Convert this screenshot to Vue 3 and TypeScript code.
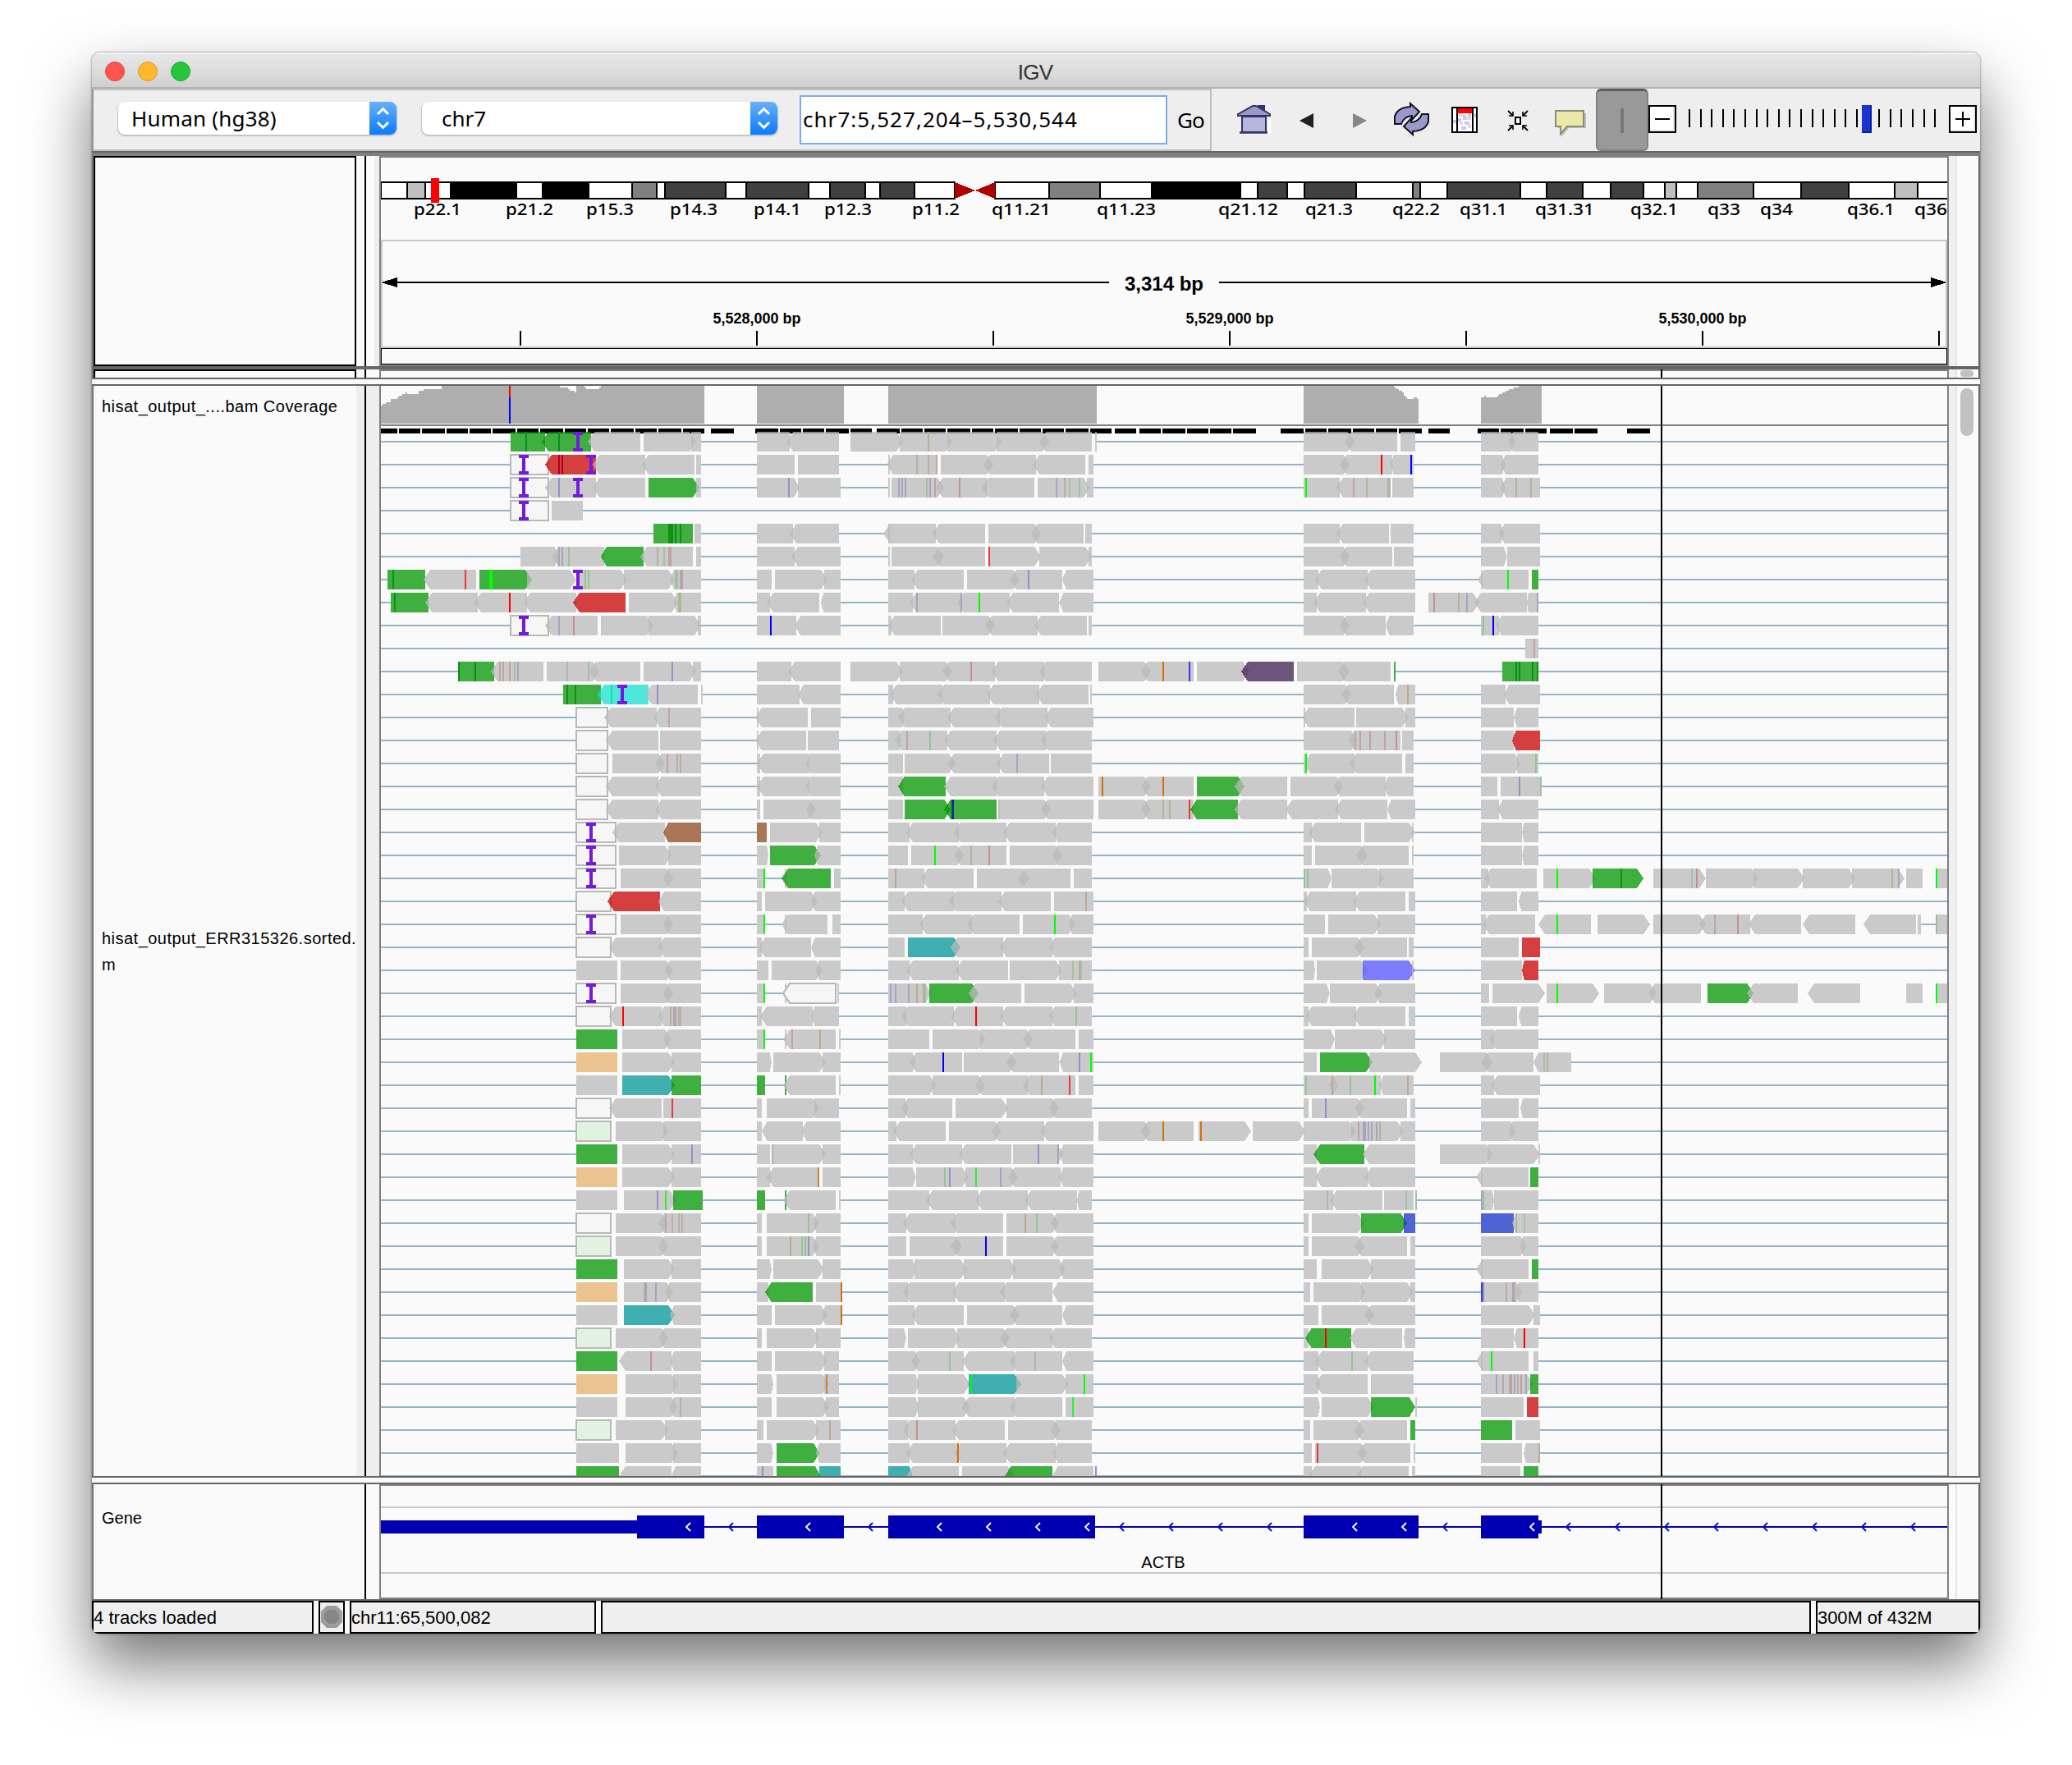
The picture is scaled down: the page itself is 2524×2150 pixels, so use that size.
<script setup lang="ts">
type Shape = { d: string; fill: string; stroke: string; alpha: number }
type Bar = { x: number; y: number; w: number; h: number; fill: string; alpha: number }

/* ---------- ideogram ---------- */
const W = '#ffffff', K = '#000000', D = '#404040', M = '#808080', L = '#bfbfbf'
const bandStops: [number, string][] = [
  [464, W], [496, L], [518, W], [549, K], [629, W], [661, K], [717, W], [770, M], [800, W], [810, D],
  [884, W], [909, D], [985, W], [1011, D], [1054, W], [1072, D], [1114, W], [1163, ''], [1212, W],
  [1278, M], [1340, W], [1403, K], [1511, W], [1532, D], [1568, W], [1589, D], [1652, W], [1721, M],
  [1730, W], [1763, D], [1852, W], [1884, D], [1928, W], [1962, D], [2002, W], [2028, L], [2042, W],
  [2068, M], [2136, W], [2194, D], [2252, W], [2308, L], [2336, W], [2374, '']
]
const bands = bandStops.slice(0, -1)
  .map(([x, fill], i) => ({ x, fill, w: bandStops[i + 1][0] - x }))
  .filter(b => b.fill)
const bandLabels: [number, string, number][] = [
  [504, 'p22.1', 58], [616, 'p21.2', 58], [714, 'p15.3', 58], [816, 'p14.3', 58], [918, 'p14.1', 58],
  [1004, 'p12.3', 58], [1111, 'p11.2', 58], [1208, 'q11.21', 72], [1336, 'q11.23', 72], [1484, 'q21.12', 73],
  [1590, 'q21.3', 58], [1696, 'q22.2', 58], [1778, 'q31.1', 58], [1870, 'q31.31', 72], [1986, 'q32.1', 58],
  [2080, 'q33', 40], [2144, 'q34', 40], [2250, 'q36.1', 58], [2332, 'q36', 40]
]
const rulerTicks = [633, 921, 1209, 1497, 1785, 2073, 2361]
const rulerLabels: [number, string][] = [[922, '5,528,000 bp'], [1498, '5,529,000 bp'], [2074, '5,530,000 bp']]

/* ---------- alignments ---------- */
// Panels of the viewport: [first pixel, units per pixel]
const panels: Record<string, [number, number]> = {
  A: [440, 2.45], B: [1060, 2.24], C: [1560, 1.7818], D: [640, 2.1778], E: [1320, 1.4519], G: [1320, 2.45]
}

// Reads: "=" block, "<" reverse, ">" forward, "_" unsequenced insert, I insertion; letter+level:pos is a mismatch.
const rows: string[] = [
  'A =g446-549 <g540-686 d4:492 d4:590 <677-833 I647 >843-999 =984-1014 =1181-1279 <1270-1426 >1460-1617 B >81-224 >211-358 >345-488 <462-605 =614-618 y1:159 >1183-1322 <1296-1438 =1447-1487 C >435-510 <495-559',
  'A =h446-559 I485 <r550-701 m4:590 m4:600 <692-848 I686 <840-995 =1000-1014 =1181-1294 =1303-1424 B =49-54 <43-184 y1:127 y1:159 y1:181 >193-336 <309-452 <445-587 =596-609 >1183-1307 <1282-1425 r4:1396 <1421-1483 b4:1476 C >435-488 <478-559',
  'A =h446-559 I485 <550-701 b2:590 I647 <692-848 >g857-1009 =1000-1014 >1181-1308 b2:1276 =1303-1431 B =49-54 >58-202 <177-319 b1:78 b1:87 b1:96 g1:154 b1:163 r1:177 r2:244 <306-448 >457-600 =591-609 b1:508 y1:531 g1:544 g1:571 =1183-1281 g4:1189 <1273-1420 r1:1319 y1:1355 y1:1413 g1:1418 =1425-1483 C >435-488 <478-563 y1:511 y1:543',
  'A =h446-559 I485 =568-661',
  'A =g872-990 e4:918 e4:923 e4:928 d4:938 e4:953 =995-1014 =1181-1289 <1280-1426 B =49-54 <37-179 <171-314 >323-466 <440-582 =587-605 =1183-1281 <1273-1416 =1420-1483 C >435-485 <475-563',
  'A >475-592 <569-725 b1:590 b1:600 g2:619 <g716-843 <834-990 y1:884 g1:904 r1:919 r1:924 =1000-1014 =1181-1294 <1285-1431 B =49-54 >58-202 <171-314 >323-466 r3:325 >461-604 =596-605 >1183-1307 <1282-1425 =1429-1483 C >435-492 =492-563',
  'A =g78-191 e4:96 <187-343 r3:311 >g353-509 g4:384 g4:388 >495-642 I647 >642-794 g2:668 g2:678 >784-934 <922-1014 g1:938 g1:943 r1:953 r1:958 =1181-1225 >1235-1391 =1381-1431 B =49-121 <112-255 >264-408 <381-524 b2:432 <525-609 =1183-1223 <1214-1357 <1349-1487 C <426-538 =435-438 g4:493 =g545-559',
  'A =g88-201 e4:100 <192-348 <339-495 r4:443 <486-642 <r633-789 >799-946 <932-1014 g2:948 y1:953 =1181-1220 <1211-1367 <1372-1431 B =49-116 <109-250 b1:127 b1:248 <238-381 g4:298 <373-515 <516-609 =1183-1219 <1211-1353 <1345-1487 C >321-431 r2:333 y1:386 b1:404 <421-536 <535-559 b1:557',
  'A =h446-559 I485 <550-706 b1:590 r2:634 >715-872 >857-1014 =1004-1014 =1181-1298 b4:1222 <1296-1431 B =49-58 <50-193 >197-340 <315-457 <448-591 =596-605 >1183-1307 <1282-1407 <1408-1483 C =435-474 g2:440 b4:461 <468-559',
  'C =531-559 r1:550',
  'A =g289-397 e4:291 d4:340 <387-544 r1:414 r1:423 r1:443 g1:458 b1:467 >554-710 g1:614 g1:678 <679-833 >843-999 =990-1014 b2:928 =1181-1284 <1275-1431 >1460-1617 B >81-224 <197-340 r2:275 <333-475 <462-605 >623-766 <740-883 o4:799 b3:871 >892-1036 <p1012-1156 >1165-1308 <1278-1420 =g1429-1434 C =g481-559 e4:511 d4:518 e4:547 e4:557',
  'A =g603-715 e4:614 e4:640 <c706-857 n4:747 I779 <848-1004 b2:884 =1014-1019 =1181-1308 <1304-1431 B =49-63 <54-197 <184-327 <319-461 <452-596 =600-605 >1183-1312 <1287-1429 <1433-1487 y2:1467 C =435-488 <486-563',
  'A =h642-734 <726-882 <873-1014 r1:919 =1181-1186 <1178-1333 =1343-1431 B >49-94 <77-220 <211-354 <342-484 <475-609 =1183-1187 <1179-1322 >1326-1469 =1460-1487 C =435-506 <507-559',
  'D =h136-218 <214-353 =357-466 =614-618 <608-745 =749-832 >963-997 <981-1119 r1:1012 g2:1074 <1112-1250 <1242-1381 <1368-1503 E >389-484 <468-560 y1:480 r1:490 r1:506 r1:533 r2:554 =563-584 =703-762 <r758-807',
  'D =h136-218 >231-370 <345-466 r1:377 y1:403 y1:411 =614-623 <614-754 <745-836 =963-1002 >1006-1141 <1119-1259 <1250-1389 b1:1304 =1394-1503 E =389-392 g4:394 <388-479 <471-563 =569-584 >703-772 =767-804 g2:801',
  'D =h136-218 <214-353 <345-466 =614-623 <614-754 <745-836 =963-1002 <g990-1115 <1111-1250 <1237-1376 <1368-1507 E >26-119 <102-195 o4:33 o4:140 >g200-285 <268-360 >366-459 <442-534 <532-584 =703-732 =738-810 b2:770 g1:808',
  'D =h136-218 <214-353 <345-466 =614-623 >632-771 <745-836 =963-1002 >g1006-1128 <g1112-1250 e4:1130 k4:1134 =1254-1256 >1254-1394 <1368-1507 E >26-119 <102-195 y1:140 y1:152 r3:187 <g189-273 <267-360 <358-450 <444-538 <537-587 =703-736 <732-804',
  'D =h136-240 I174 <232-370 <w367-466 =w614-640 >649-788 =779-836 =963-1019 <1010-1150 <1137-1276 <1268-1407 <1398-1503 E =389-404 <398-491 >497-586 =582-584 =703-775 <776-804',
  'D =h136-240 I174 >248-388 =379-466 >614-645 >g649-783 <768-836 =963-1015 >1024-1163 <1137-1276 g4:1087 y1:1182 r2:1230 >1285-1424 <1398-1503 E =389-404 >409-502 <482-575 =581-584 =703-775 <776-804',
  'D =h136-240 I174 >253-392 <366-466 =614-636 g4:634 =688-693 <g680-810 =819-836 =963-1058 y2:982 <1050-1189 >1198-1337 <1307-1446 =1455-1503 E >389-438 g2:391 g2:397 >438-531 =523-584 >703-717 <709-801 >813-906 g4:838 >g900-990 e4:951 >1008-1100 g1:1075 r2:1085 >1101-1193 >1185-1275 >1272-1364 >1359-1452 y1:1430 b1:1441 =1455-1484 =1508-1530 g4:1509',
  'D =h136-228 <r219-357 <353-466 =614-627 >636-774 <758-836 =963-1006 <998-1137 <1124-1263 <1254-1394 =1402-1507 y2:1487 E =389-395 <390-482 <477-569 =575-587 =703-767 <769-804',
  'D =h136-240 I174 >253-392 <366-466 =614-636 g4:634 =688-693 <681-801 =814-836 =963-1054 <1045-1185 <1172-1311 >1320-1459 g4:1404 <1442-1507 E =389-427 >433-525 =519-587 =703-711 <706-799 <805-897 g4:838 >909-1001 >1008-1101 <1089-1179 r1:1117 r2:1157 <1176-1269 <1272-1365 <1380-1472 =1475-1481 =1508-1530 g2:1509',
  'D =h136-228 <223-362 <354-466 =614-627 <618-758 <759-836 =963-1006 >t1015-1154 <1128-1267 <1259-1398 <1390-1503 E =389-398 >404-497 <479-572 =575-584 =703-769 =r775-807',
  'D =135-244 >253-392 <371-466 =614-645 >653-788 <771-836 =963-1019 <1011-1150 <1141-1281 >1285-1424 =1415-1503 g1:1453 y1:1469 g1:1474 E >389-410 >412-502 >v494-586 =582-584 =703-775 <r775-804',
  'D =h136-240 I174 >253-392 <366-466 =614-636 g4:634 =688-690 <h686-823 =828-832 >963-1074 b1:969 b1:982 b1:1017 r1:1039 y1:1056 g1:1061 >g1071-1202 <1176-1315 >1324-1463 =1455-1507 E >389-436 >436-528 <514-587 =703-717 >723-815 >819-912 g4:838 >920-1013 <1000-1092 >g1103-1184 <1173-1263 <1281-1373 _1373-1455 =1455-1484 =1508-1530 g4:1509',
  'D =h136-228 <223-362 r4:259 <354-466 y1:385 r1:395 b1:399 y1:407 y1:411 =614-627 <623-763 <759-832 =963-1010 <999-1137 <1128-1267 r4:1195 <1259-1398 <1390-1503 g2:1461 E =389-398 <392-482 <477-569 =575-587 =703-767 <769-804',
  'D =g135-244 >257-388 <366-466 =614-636 g4:634 =688-693 <686-823 r1:708 y2:782 =832-836 =963-1071 >1080-1220 >1207-1346 <1320-1459 =1468-1507 E >389-443 >444-537 =531-587 =703-726 <718-804',
  'D =o135-244 >257-396 =388-466 >614-653 >658-797 =788-836 >963-1037 <1020-1159 b4:1108 >1163-1302 <1276-1416 <1417-1507 b2:1470 g4:1500 E =389-412 >g418-511 >505-598 _598-630 >630-722 <703-796 <795-862 g1:814 y1:820',
  'D =135-244 >t257-396 =g388-466 =g614-636 =g688-693 <686-823 =832-836 >963-1088 >1080-1220 <1194-1333 <1320-1459 y2:1370 r3:1444 =1468-1507 E >389-449 <434-526 g2:393 y2:439 g2:471 g4:516 <524-584 y2:573 =703-726 <720-807',
  'D =h136-228 <223-362 =366-466 r3:390 =614-627 >640-779 =767-832 >963-1015 <998-1132 >1141-1280 >1276-1416 <1390-1503 G =657-671 >681-838 <809-965 b2:722 =975-990 =1186-1298 <1303-1357',
  'D =H136-228 >240-379 =366-466 =614-627 <628-736 <733-836 =963-984 <977-1115 >1124-1263 <1237-1376 <1368-1507 G >44-201 <172-328 o4:237 >343-500 o4:350 >505-661 >657-813 >799-955 r1:820 b1:835 b1:840 b1:850 b1:859 b1:874 y1:884 =946-990 >1186-1289 <1269-1357',
  'D =g135-244 >257-396 =388-466 b2:442 =614-651 >655-797 y1:655 =788-836 =963-1028 <1020-1159 <1150-1289 >1294-1429 b2:1361 b1:1414 <1416-1507 G =657-696 <g686-838 <833-990 _990-1063 >1063-1220 >1205-1361 =1357-1362',
  'D =o135-244 >257-396 =388-466 >614-653 <640-780 o3:777 =788-836 >963-1036 >1037-1176 g2:1113 b2:1126 >1167-1307 g3:1195 b1:1261 <1281-1420 <1417-1507 G =657-696 <691-848 <838-990 <1173-1328 =1186-1190 =g1333-1357',
  'D =135-244 >261-400 b2:350 g3:372 =g392-470 =g614-636 =g688-693 <686-823 =832-836 =963-1071 <1064-1202 <1194-1333 <1325-1463 <1464-1503 G =657-745 g1:727 <736-892 =897-985 g1:962 =990-995 g1:992 >1186-1224 b1:1188 g1:1193 =1225-1357',
  'D =h136-228 >240-379 <354-466 r1:372 y1:390 y1:407 y1:416 =614-627 >640-779 g2:751 <763-836 =963-1010 <1003-1141 <1128-1267 >1276-1415 y2:1326 g2:1357 <1394-1507 G =657-671 >681-838 >g828-965 =u955-990 =u1186-1284 <1280-1357 y1:1291 g1:1315',
  'D =H136-228 >240-379 <353-466 =614-627 >640-779 y2:703 g2:734 g2:742 b2:751 <763-836 =963-1010 >1019-1159 <1128-1267 b4:1222 >1276-1415 <1394-1507 G =657-671 >681-838 <809-965 =975-990 >1186-1323 <1304-1357',
  'D =g135-244 >261-396 =388-466 >614-653 >658-792 =788-836 >963-1037 >1032-1171 >1163-1302 >1294-1433 <1416-1507 G =657-696 >710-867 =857-990 <1173-1328 =1186-1190 =g1338-1357',
  'D =o135-244 >261-392 y1:316 b1:320 b1:346 <371-466 =614-645 <g636-762 =771-836 o4:838 =963-1015 <1003-1141 <1133-1272 <1259-1398 <1396-1507 G =657-676 >686-843 >828-985 =975-990 >1186-1308 b3:1188 b2:1193 y1:1261 b1:1281 y1:1286 <1290-1357',
  'D =135-244 >t261-396 <384-466 =614-653 >662-801 <789-836 o4:838 =963-1032 <1024-1163 >1172-1311 <1285-1424 <1425-1507 G =657-701 >710-867 <838-990 >1186-1347 =1343-1362',
  'D =H136-228 >240-379 <353-466 =614-627 >640-779 =771-836 >963-1011 >1015-1154 >1146-1285 <1259-1398 <1390-1503 G =657-671 <g661-799 r4:722 <794-951 <955-990 =1186-1284 <1285-1357 r4:1315',
  'D =g135-244 <248-388 r2:333 <384-466 =614-653 >662-801 =793-832 >963-1045 <1024-1163 g2:1126 <1160-1298 <1285-1424 y1:1352 <1425-1507 G =657-701 <691-848 g2:801 <838-985 <1173-1328 =1186-1190 g4:1217 =1343-1357',
  'D =o135-244 >266-405 =392-466 >614-658 >666-805 =793-832 o3:799 >963-1044 >1041-1180 >t1176-1315 g4:1182 >1302-1442 =1433-1507 g4:1483 G >657-706 <691-848 =857-985 >1186-1345 b1:1232 r1:1251 r1:1272 r1:1276 b1:1286 y1:1296 r1:1305 b1:1320 =g1333-1357',
  'D =135-244 >266-405 <384-466 y1:411 =614-653 >666-805 <793-832 >963-1044 >1041-1180 <1159-1298 <1285-1424 =1433-1507 g3:1453 G >657-706 >710-867 >g857-992 =990-995 =1186-1313 =r1323-1357',
  'D =H136-228 >240-379 =370-466 =614-632 >640-779 =771-836 y2:808 =963-1015 <1003-1141 r2:1039 <1133-1272 >1281-1420 <1394-1503 G =657-676 >686-838 <809-965 =g975-990 =g1186-1279 =1289-1362',
  'D =135-248 >266-405 =392-466 >614-658 >g666-779 <771-836 =963-1019 <1010-1150 o4:1148 <1138-1276 <1268-1407 <1398-1503 G =657-681 >691-848 r3:698 <819-975 =985-990 =1186-1308 <1313-1362 y1:1359',
  'D =g135-248 <248-388 <388-466 =614-658 b2:629 >g666-784 =t780-836 >t963-1028 <1011-1150 >1159-1298 <g1270-1398 <1398-1507 b2:1513 G =657-681 <671-828 <814-970 =980-990 =1186-1303 =g1313-1357'
]

const readFill: Record<string, string> = {
  '': 'rgb(185,185,185)', g: 'rgb(0,150,0)', r: 'rgb(200,0,0)', t: 'rgb(0,150,150)', c: 'rgb(22,223,210)',
  w: 'rgb(143,73,34)', p: 'rgb(60,30,83)', v: 'rgb(83,83,255)', u: 'rgb(20,50,200)', o: 'rgb(228,176,107)',
  h: '#f6f6f6', H: '#e1f2e1'
}
const baseFill: Record<string, string> = {
  r: '#ff0000', g: '#00ff00', b: '#0000ff', o: '#d17105', d: '#078c28', e: '#109010', m: '#b00018',
  n: '#10e0a0', k: '#0818c8'
}
// Low-quality mismatches fade toward the read colour.
const fadedFill: Record<string, string> = {
  r1: '#c1a2a2', g1: '#a4c0a4', b1: '#a5a4c2', y1: '#baae9f',
  r2: '#c79090', g2: '#92c692', b2: '#9290c8', y2: '#bfa78c',
  r3: '#ee3636', g3: '#30f030', b3: '#3636ee', o3: '#cd8434'
}

const reads: Shape[] = []
const marks: Bar[] = []
const links: Bar[] = []
const snap = (n: number) => Math.round(n / 2) * 2
const LEFT = 464, RIGHT = 2372

rows.forEach((row, i) => {
  const top = 526 + i * 28
  const mid = top + 12
  const bottom = top + 24
  const spans: [number, number][] = []
  let panel = panels.A
  for (const token of row.split(' ')) {
    if (panels[token]) { panel = panels[token]; continue }
    const [origin, scale] = panel
    const px = (n: string) => snap(origin + Number(n) / scale)
    const read = /^([=<>_])([a-zH]?)(\d+)-(\d+)$/.exec(token)
    if (read) {
      const [, kind, tint, from, to] = read
      const a = px(from)
      const b = Math.max(px(to), a + 2)
      spans.push([kind === '<' ? a + 2 : a, b])
      if (kind === '_') continue
      const tip = Math.min(8, (b - a) / 7.5)
      const hollow = tint === 'h' || tint === 'H'
      const d = kind === '<'
        ? `M${a} ${mid}L${a + tip} ${top}H${b}V${bottom}H${a + tip}Z`
        : kind === '>'
          ? `M${a} ${top}H${b - tip}L${b} ${mid}L${b - tip} ${bottom}H${a}Z`
          : `M${a} ${top}H${b}V${bottom}H${a}Z`
      reads.push({ d, fill: readFill[tint], stroke: hollow ? '#b8b8b8' : 'none', alpha: hollow ? 1 : 0.75 })
      continue
    }
    if (token[0] === 'I') {
      const c = px(token.slice(1))
      const fill = '#7519dd'
      marks.push({ x: c - 2, y: top, w: 4, h: 24, fill, alpha: 1 })
      marks.push({ x: c - 6, y: top, w: 12, h: 4, fill, alpha: 1 })
      marks.push({ x: c - 6, y: bottom - 4, w: 12, h: 4, fill, alpha: 1 })
      continue
    }
    const x = snap(origin + Number(token.slice(3)) / scale - 1)
    marks.push({ x, y: top, w: 2, h: 24, fill: fadedFill[token.slice(0, 2)] ?? baseFill[token[0]], alpha: 1 })
  }
  spans.sort((p, q) => p[0] - q[0])
  let at = LEFT
  for (const [a, b] of spans) {
    if (a - at > 17 || (at === LEFT && a > LEFT)) links.push({ x: at, y: mid - 1, w: a - at, h: 2, fill: '#93b5c9', alpha: 1 })
    at = Math.max(at, b)
  }
  if (at < RIGHT) links.push({ x: at, y: mid - 1, w: RIGHT - at, h: 2, fill: '#93b5c9', alpha: 1 })
})

/* ---------- junction dashes ---------- */
const dashSource: Record<string, string> = {
  A: '59-108 113-176 181-250 255-318 323-387 392-461 465-529 534-603 608-671 676-740 745-813 818-882 887-955 960-1024 1044-1112 1176-1245 1249-1313 1318-1382 1387-1455 1460-1524',
  B: '-42-4 18-81 85-143 148-206 211-273 278-336 341-403 408-466 471-529 533-596 600-659 668-726 735-793 797-860 865-923 927-985 990-1053 1120-1183 1187-1245 1250-1313 1317-1375 1380-1438 1443-1505',
  C: '321-367 428-474 478-527 531-577 584-634 638-688 752-802'
}
const dashes = Object.entries(dashSource).flatMap(([key, list]) => {
  const [origin, scale] = panels[key]
  return list.split(' ').map(item => {
    const m = /^(-?\d+)-(\d+)$/.exec(item)!
    const x = Math.round(origin + Number(m[1]) / scale)
    return { x, w: Math.max(0, Math.round(origin + Number(m[2]) / scale) - x) }
  })
})

/* ---------- coverage ---------- */
const coverage = [
  'M464 516V494H466V492H470V490H476V486H484V484H486V482H490V480H494V478H496V480H510V476H516V474H538V470H682V472H688V472H692V474H694V476H700V478H702V470H712V472H714V474H730V472H732V470H858V516Z',
  'M922 470H1028V516H922Z',
  'M1082 470H1336V516H1082Z',
  'M1588 470H1698V472H1701V474H1704V476H1708V478H1710V482H1712V484H1714V486H1722V484H1726V486H1728V516H1588Z',
  'M1804 516V484H1808V482H1810V484H1824V482H1826V480H1830V478H1834V476H1838V474H1844V472H1850V470H1878V516Z'
]

/* ---------- gene model ---------- */
const exons: [number, number][] = [[776, 858], [922, 1028], [1082, 1334], [1588, 1728], [1804, 1874]]
const chevrons = [836, 888, 982, 1058, 1142, 1202, 1262, 1322, 1364, 1424, 1484, 1544, 1648, 1708, 1758, 1864, 1908, 1968, 2028, 2088, 2148, 2208, 2268, 2328]
const inExon = (x: number) => exons.some(([a, b]) => x >= a && x <= b)

const zoomTicks = Array.from({ length: 23 }, (_, i) => Math.round(2057 + i * 13.6)).filter((_, i) => i !== 16)
</script>

<template>
  <div class="desktop">
    <div class="window">
      <header class="titlebar">
        <div class="lights"><i class="red" /><i class="yellow" /><i class="green" /></div>
        <div class="title">IGV</div>
      </header>

      <div class="toolbar">
        <div class="command">
          <div class="combo genome"><span>Human (hg38)</span>
            <svg class="stepper" width="33" height="40" viewBox="0 0 33 40"><path d="M10 15L16.5 8.500L23 15M10 25L16.500 31.500L23 25" /></svg>
          </div>
          <div class="combo chrom"><span>chr7</span>
            <svg class="stepper" width="33" height="40" viewBox="0 0 33 40"><path d="M10 15L16.500 8.500L23 15M10 25L16.500 31.500L23 25" /></svg>
          </div>
          <div class="locus">chr7:5,527,204–5,530,544</div>
          <div class="go">Go</div>
        </div>
        <div class="icons">
          <svg width="64" height="76" viewBox="1496 108 64 76">
            <path d="M1514 163H1548V146H1545V161" fill="#fff" />
            <rect x="1513" y="142" width="29" height="19" fill="#b5b5dd" stroke="#333366" stroke-width="2" />
            <path d="M1533 136V129H1540V142" fill="#333366" stroke="#333366" stroke-width="2" />
            <path d="M1508 139L1526 129H1530L1547 139V141H1508Z" fill="#9999c6" stroke="#333366" stroke-width="2" />
            <path d="M1510 161.500H1544" stroke="#333366" stroke-width="2.500" />
          </svg>
          <svg width="64" height="76" viewBox="1560 108 64 76"><path d="M1583 147L1600 138V156Z" fill="#222" /></svg>
          <svg width="64" height="76" viewBox="1624 108 64 76"><path d="M1665 147L1648 138V156Z" fill="#878787" /></svg>
          <svg width="64" height="76" viewBox="1688 108 64 76">
            <g fill="#9999cc" stroke="#111122" stroke-width="2" stroke-linejoin="miter">
              <path d="M1699 151V142Q1702 131 1718 130V126L1729 136L1720 146V141Q1710 142 1707 151Z" />
              <path d="M1699 151V142Q1702 131 1718 130V126L1729 136L1720 146V141Q1710 142 1707 151Z" transform="rotate(180 1719.500 145)" />
            </g>
          </svg>
          <svg width="64" height="76" viewBox="1752 108 64 76" shape-rendering="crispEdges">
            <rect x="1769" y="131" width="30" height="30" fill="#fff" stroke="#000" stroke-width="2" />
            <path d="M1776 138h6v4h-6zM1786 142h6v4h-6zM1778 148h4v4h-4zM1788 152h4v4h-4z" fill="#ffd0d0" />
            <path d="M1782 140h4v6h-4zM1776 144h4v4h-4zM1784 148h6v4h-6zM1780 154h6v4h-6zM1788 138h4v4h-4zM1770 146h4v4h-4zM1796 138h2v5h-2z" fill="#c4c8ff" />
            <rect x="1776" y="132" width="17" height="6" fill="#f00" />
            <path d="M1775 131V161M1794 131V161" stroke="#000" stroke-width="2" />
          </svg>
          <svg width="64" height="76" viewBox="1816 108 64 76">
            <rect x="1846" y="143" width="6" height="8" fill="#fff" stroke="#000" stroke-width="2" />
            <path d="M1837 135L1843 141M1861 135L1855 141M1837 159L1843 153M1861 159L1855 153" stroke="#000" stroke-width="1.800" />
            <path d="M1843 136V141H1838M1855 136V141H1860M1843 158V153H1838M1855 158V153H1860" fill="none" stroke="#000" stroke-width="1.600" />
          </svg>
          <svg width="64" height="76" viewBox="1880 108 64 76">
            <path d="M1898 138H1932V156H1911L1902 167V156H1898Z" fill="#bdbdbd" />
            <path d="M1895 135H1929V154H1909L1901 163V154H1895Z" fill="#ece8a8" stroke="#8c8c7c" stroke-width="2" />
          </svg>
          <div class="pressed"><i /></div>
          <div class="zoombox"><svg width="30" height="30"><path d="M6 15H24" stroke="#000" stroke-width="2" /></svg></div>
          <svg width="332" height="76" viewBox="2042 108 332 76" shape-rendering="crispEdges">
            <rect v-for="x in zoomTicks" :key="x" :x="x" y="133" width="2" height="22" />
            <rect x="2268" y="128" width="12" height="34" fill="#0c1f9c" />
            <rect x="2268" y="128" width="10" height="32" fill="#1a35d4" />
          </svg>
          <div class="zoombox"><svg width="30" height="30"><path d="M6 15H24M15 6V24" stroke="#000" stroke-width="2" /></svg></div>
        </div>
      </div>

      <section class="row head">
        <div class="names boxed" />
        <div class="gap" /><div class="rule" /><div class="gutter" />
        <svg class="data" width="1908" height="256" viewBox="464 190 1908 256">
          <g shape-rendering="crispEdges">
            <rect x="464" y="190" width="1908" height="2" fill="#808080" />
            <rect v-for="b in bands" :key="b.x" :x="b.x" y="222" :width="b.w" height="20" :fill="b.fill" :stroke="b.fill === K ? 'none' : '#000'" stroke-width="1.500" />
            <path d="M464 221H1164V223H464ZM464 241H1164V243H464ZM1211 221H2372V223H1211ZM1211 241H2372V243H1211Z" />
            <path d="M1163 222L1188 232L1163 242ZM1212 222L1188 232L1212 242Z" fill="#b00000" />
            <rect x="525" y="217" width="10" height="30" fill="#f00" />
            <path d="M465 423V293H2371V423Z" fill="none" stroke="#c9c7d1" stroke-width="2" />
            <rect x="464.500" y="424.500" width="1907" height="19" fill="#fafafa" stroke="#000" stroke-width="1" />
            <path d="M484 343H1351V345H484ZM1485 343H2352V345H1485ZM464 344L484 338V350ZM2372 344L2352 338V350Z" />
            <rect v-for="x in rulerTicks" :key="x" :x="x" y="403" width="2" height="18" />
            <rect x="464" y="444" width="1908" height="2" fill="#808080" />
          </g>
          <text v-for="l in bandLabels" :key="l[0]" class="band" :x="l[0]" y="262" :textLength="l[2]" lengthAdjust="spacingAndGlyphs">{{ l[1] }}</text>
          <text class="span" x="1418" y="354">3,314 bp</text>
          <text v-for="l in rulerLabels" :key="l[0]" class="pos" :x="l[0]" y="394">{{ l[1] }}</text>
        </svg>
        <div class="pad" /><div class="scroll" />
      </section>
      <div class="split thick" />

      <section class="row strip">
        <div class="names boxed open" />
        <div class="gap" /><div class="rule" /><div class="gutter" />
        <svg class="data" width="1908" height="10" viewBox="464 450 1908 10">
          <rect x="464" y="450" width="1908" height="2" fill="#808080" />
          <rect x="2023" y="450" width="2" height="10" />
        </svg>
        <div class="pad" /><div class="scroll"><i class="thumb small" /></div>
      </section>
      <div class="split bar" />

      <section class="row tracks">
        <div class="names">
          <div class="label coverage">hisat_output_....bam Coverage</div>
          <div class="label reads">hisat_output_ERR315326.sorted.<br>m</div>
        </div>
        <div class="gap grey" /><div class="rule" /><div class="gutter grey" />
        <svg class="data" width="1908" height="1328" viewBox="464 470 1908 1328" shape-rendering="crispEdges">
          <path v-for="d in coverage" :key="d" :d="d" fill="#aeaeae" />
          <rect x="620" y="470" width="2" height="14" fill="#f00" />
          <rect x="620" y="484" width="2" height="32" fill="#00f" />
          <rect x="464" y="517" width="1908" height="2" fill="#808080" />
          <rect v-for="(s, i) in dashes" :key="'d' + i" :x="s.x" y="522" :width="s.w" height="6" />
          <rect v-for="(l, i) in links" :key="'l' + i" :x="l.x" :y="l.y" :width="l.w" :height="l.h" :fill="l.fill" />
          <path v-for="(r, i) in reads" :key="'r' + i" :d="r.d" :fill="r.fill" :stroke="r.stroke" stroke-width="2" :opacity="r.alpha" />
          <rect v-for="(m, i) in marks" :key="'m' + i" :x="m.x" :y="m.y" :width="m.w" :height="m.h" :fill="m.fill" :opacity="m.alpha" />
          <rect x="2023" y="470" width="2" height="1328" />
        </svg>
        <div class="pad" /><div class="scroll"><i class="thumb" /></div>
      </section>
      <div class="split bar" />

      <section class="row gene">
        <div class="names"><div class="label">Gene</div></div>
        <div class="gap" /><div class="rule" /><div class="gutter" />
        <svg class="data" width="1908" height="140" viewBox="464 1808 1908 140">
          <g shape-rendering="crispEdges">
            <path d="M464 1808H2372V1810H464ZM464 1946H2372V1948H464Z" fill="#808080" />
            <path d="M464 1835H2372V1837H464ZM464 1915H2372V1917H464Z" fill="#c9c7d1" />
            <g fill="#0000b2">
              <rect x="464" y="1852" width="312" height="16" />
              <rect x="776" y="1859" width="1596" height="2" />
              <rect x="1874" y="1852" width="4" height="16" />
              <rect v-for="e in exons" :key="e[0]" :x="e[0]" y="1846" :width="e[1] - e[0]" height="28" />
            </g>
          </g>
          <path v-for="x in chevrons" :key="x" :d="`M${x + 5} 1855L${x} 1860L${x + 5} 1865`" fill="none" :stroke="inExon(x) ? '#fff' : '#0000e0'" stroke-width="1.800" />
          <text class="name" x="1417" y="1910">ACTB</text>
          <rect x="2023" y="1808" width="2" height="140" />
        </svg>
        <div class="pad" /><div class="scroll" />
      </section>
      <div class="split thin" />

      <footer class="status">
        <div class="cell c1">4 tracks loaded</div>
        <div class="cell c2">
          <svg width="28" height="30" viewBox="0 0 28 30"><path d="M8 1H20L27 8V21L20 28H8L1 21V8Z" fill="#9c9c9c" /><path d="M10 6H18L23 11V18L18 23H10L5 18V11Z" fill="#868686" /></svg>
        </div>
        <div class="cell c3">chr11:65,500,082</div>
        <div class="cell c4" />
        <div class="cell c5">300M of 432M</div>
      </footer>
    </div>
  </div>
</template>

<style>
body { background: #fff; }
</style>

<style scoped>
* { box-sizing: border-box; }
svg { display: block; flex: none; }
.desktop { width: 2524px; height: 2150px; padding: 64px 112px; background: #fff; overflow: hidden; font-family: "Liberation Sans", Arial, sans-serif; color: #000; }
.window { width: 2300px; height: 1926px; display: flex; flex-direction: column; border-radius: 10px 10px 8px 8px; overflow: hidden; background: #eee; box-shadow: 0 0 2px 1px rgba(0, 0, 0, .25), 0 38px 76px rgba(0, 0, 0, .54); }
.titlebar { height: 44px; flex: none; display: grid; grid-template-columns: 1fr auto 1fr; align-items: center; background: linear-gradient(#e8e8e8, #d0d0d0); border-top: 2px solid #f4f4f4; border-bottom: 2px solid #b2b2b2; }
.lights { display: flex; gap: 16px; padding-left: 16px; }
.lights i { width: 24px; height: 24px; border-radius: 50%; border: 1px solid; }
.lights .red { background: #ff5450; border-color: #e33e3a; }
.lights .yellow { background: #ffb72b; border-color: #dd9b1d; }
.lights .green { background: #25c63b; border-color: #18ab29; }
.title { font: 26px/40px "Liberation Sans", sans-serif; letter-spacing: -.7px; color: #333; padding-top: 2px; margin-left: -2px; }
.toolbar { height: 82px; flex: none; display: flex; background: #eee; border-bottom: 4px solid #808080; box-shadow: inset 0 -2px #666; padding-bottom: 2px; }
.command { width: 1364px; height: 76px; display: flex; align-items: center; border: 2px solid #bfbfbf; border-left-color: #999; padding-left: 30px; font: 26px "Noto Sans", sans-serif; }
.combo { height: 40px; display: flex; justify-content: space-between; align-items: center; border-radius: 8px; background: #fff; box-shadow: 0 1px 1px 1px #c4c4c4; overflow: hidden; margin-top: -4px; }
.genome { width: 339px; margin-right: 31px; padding-left: 16px; letter-spacing: .2px; }
.chrom { width: 433px; margin-right: 27px; padding-left: 24px; }
.stepper { background: linear-gradient(#68b0fa, #0a7bff); }
.stepper path { fill: none; stroke: #fff; stroke-width: 3; }
.locus { width: 448px; height: 60px; line-height: 54px; padding-left: 2px; background: #fff; border: 2px solid #7aaee6; letter-spacing: 1.03px; white-space: nowrap; }
.go { margin-left: 12px; letter-spacing: -1px; }
.icons { display: flex; align-items: center; padding-left: 20px; }
.pressed { width: 64px; height: 76px; border-radius: 6px; background: #999; border: 2px solid #808080; border-top: 3px solid #5c5c5c; display: flex; justify-content: center; align-items: center; }
.pressed i { width: 4px; height: 30px; background: #777; }
.zoombox { width: 34px; height: 34px; border: 2px solid #000; background: #fff; box-shadow: inset -2px -2px #e8e8e8; margin-top: -2px; }
.row { display: flex; flex: none; background: #fafafa; border-left: 2px solid #777; border-right: 2px solid #666; }
.head { height: 256px; }
.strip { height: 10px; }
.tracks { height: 1328px; }
.gene { height: 140px; }
.names { width: 320px; display: flex; flex-direction: column; padding-left: 10px; }
.boxed { border: 2px solid #000; }
.open { border-bottom: 0; }
.gap { width: 10px; }
.rule { width: 2px; background: #000; }
.gutter { width: 18px; border-right: 2px solid #808080; }
.head .gutter { background: linear-gradient(90deg, #fafafa 10px, #eee 10px); }
.grey { background: #eee; }
.pad { width: 12px; border-left: 2px solid #808080; border-right: 2px solid #e6e6e6; background: #f0f0f0; }
.gene .pad { background: #fafafa; }
.scroll { width: 26px; padding: 3px 0 0 4px; background: #fafafa; }
.thumb { display: block; width: 16px; height: 58px; border-radius: 8px; background: #c1c1c1; }
.thumb.small { height: 8px; margin-top: -2px; }
.split { flex: none; }
.thick { height: 4px; background: #666; }
.bar { height: 10px; background: #fafafa; border: 2px solid #666; border-width: 2px 0; }
.thin { height: 2px; background: #666; }
.label { font-size: 20px; line-height: 32px; letter-spacing: .48px; white-space: nowrap; }
.coverage { margin-top: 9px; }
.label.reads { margin-top: 616px; }
.gene .label { margin-top: 25px; letter-spacing: 0; }
.status { height: 40px; flex: none; display: flex; gap: 6px; font-size: 22px; background: #fafafa; }
.cell { border: 2px solid #000; background: #efefef; line-height: 38px; white-space: nowrap; overflow: hidden; }
.c1 { width: 270px; letter-spacing: .05px; }
.c2 { width: 32px; padding-top: 3px; }
.c3 { width: 300px; }
.c4 { width: 1474px; }
.c5 { width: 200px; letter-spacing: -.1px; }
.band { font: 500 20px "Noto Sans", sans-serif; }
.span { font: bold 24px "Liberation Sans", sans-serif; text-anchor: middle; }
.pos { font: bold 18px "Liberation Sans", sans-serif; text-anchor: middle; }
.name { font: 20px "Liberation Sans", sans-serif; text-anchor: middle; }
</style>
